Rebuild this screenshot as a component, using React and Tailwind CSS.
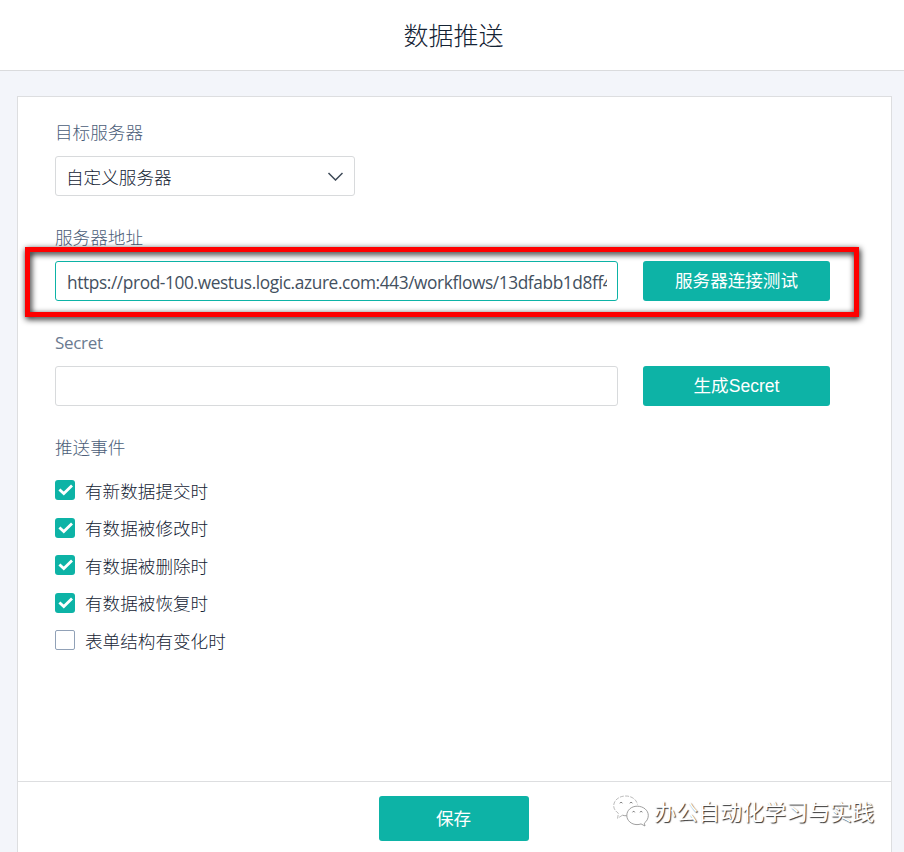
import { useState } from 'react';

const events = [
  { id: 'create', label: '有新数据提交时', checked: true },
  { id: 'update', label: '有数据被修改时', checked: true },
  { id: 'delete', label: '有数据被删除时', checked: true },
  { id: 'recover', label: '有数据被恢复时', checked: true },
  { id: 'form', label: '表单结构有变化时', checked: false },
];

function Label({ children, className = 'font-light text-[#4b5d78]' }) {
  return (
    <div className={`h-6 whitespace-nowrap leading-[22px] ${className}`}>{children}</div>
  );
}

function Button({ children, className }) {
  return (
    <button
      type="button"
      className={`shrink-0 rounded-[3px] bg-[#0db3a6] text-center font-['Liberation_Sans','Noto_Sans_CJK_SC',sans-serif] tracking-[-0.02px] text-white ${className}`}
    >
      {children}
    </button>
  );
}

function Checkbox({ label, checked, onChange }) {
  return (
    <button type="button" className="flex h-[37.5px] items-start text-left" onClick={onChange}>
      {checked ? (
        <span className="h-5 w-5 shrink-0 rounded-[3px] bg-[#0db3a6]">
          <svg viewBox="0 0 20 20" className="h-5 w-5" fill="none" stroke="#fff" strokeWidth="2.8">
            <path d="M4.4 9.4 L8.8 13.6 L17 5.6" />
          </svg>
        </span>
      ) : (
        <span className="h-5 w-5 shrink-0 rounded-[2px] border border-[#91a1b7] bg-white" />
      )}
      <span className="ml-2.5 pt-[0.5px] whitespace-nowrap font-light leading-[21px]">{label}</span>
    </button>
  );
}

// Account watermark, white with a dark embossed edge
function Watermark() {
  return (
    <div className="absolute top-[13px] right-[17px] flex items-center">
      <svg width="36" height="32" viewBox="0 0 36 32" fill="#fff" stroke="#888" strokeWidth="0.8">
        <path
          d="M9.5 20.2 L4.6 23.3 L5.4 18.3 C2.6 16.3 0.7 13.8 0.7 10.8 C0.7 5.4 6 1 12.6 1 C18.7 1 23.5 4.5 24.5 9.5"
          stroke="#aaa"
          strokeDasharray="4 1.2"
        />
        <path d="M9.5 20.2 C11 20.7 12.5 20.8 13.8 20.7" />
        <path d="M31.3 28.2 L32 31 L28 28.9 C26.7 29.4 25.4 29.6 24 29.6 C18.3 29.6 13.8 25.5 13.8 20.5 C13.8 15.2 18.3 11.2 24.2 11.2 C30.3 11.2 35.3 15.2 35.3 20.5 C35.3 23.6 33.7 26.3 31.3 28.2 Z" />
        <path d="M6.8 8.3 a1.4 1.4 0 0 1 2.6 0 M16.8 8.3 a1.4 1.4 0 0 1 2.6 0 M19.5 17.3 a1.2 1.2 0 0 1 2.3 0 M27 17.3 a1.2 1.2 0 0 1 2.3 0" stroke="#555" />
      </svg>
      <span className="ml-[5px] whitespace-nowrap text-[22px] leading-8 text-white [text-shadow:1px_1px_1px_#333]">
        办公自动化学习与实践
      </span>
    </div>
  );
}

export default function App() {
  const [items, setItems] = useState(events);
  const [url, setUrl] = useState('https://prod-100.westus.logic.azure.com:443/workflows/13dfabb1d8ff4');
  const [secret, setSecret] = useState('');

  const toggle = (id) =>
    setItems(items.map((it) => (it.id === id ? { ...it, checked: !it.checked } : it)));

  return (
    <div className="flex h-[852px] w-[904px] flex-col overflow-hidden bg-[#f3f5fa] font-['Open_Sans','Noto_Sans_CJK_SC',sans-serif] text-[17.6px] text-[#142334]">
      <header className="flex h-[71px] shrink-0 items-center justify-center border-b border-[#dadbdd] bg-white pt-0.5 pl-[3px]">
        <h1 className="text-[25px] font-light">数据推送</h1>
      </header>

      <main className="mt-[25px] mr-3 ml-[17px] flex flex-1 flex-col border-x border-t border-[#dddee0] bg-white">
        <div className="h-[684px] px-[37px] pt-6">
          <Label>目标服务器</Label>
          <button
            type="button"
            className="mt-[11px] flex h-10 w-[300px] items-center justify-between rounded-[3px] border border-[#d8dadc] pr-[11px] pl-2.5"
          >
            <span className="pt-[3px] font-light">自定义服务器</span>
            <svg width="16" height="10" viewBox="0 0 16 10" fill="none" stroke="#3d4957" strokeWidth="1.5">
              <path d="M1.5 2 L8.5 9 L15.5 2" />
            </svg>
          </button>

          <div className="relative mt-[30px]">
            <Label>服务器地址</Label>
            <div className="mt-[11px] flex gap-[25px]">
              <input
                value={url}
                onChange={(e) => setUrl(e.target.value)}
                className="h-10 w-[563px] rounded-[3px] border border-[#0db3a6] pt-0.5 pr-2.5 pl-[11px] text-[17.3px] tracking-[-0.39px] text-[#435060] outline-none"
              />
              <Button className="h-10 w-[187px]">服务器连接测试</Button>
            </div>
            {/* Highlight frame around the address row */}
            <div className="pointer-events-none absolute top-[21px] -left-[30px] h-[70px] w-[834px] border-[5px] border-[#fe0000] drop-shadow-[1px_2px_3px_rgba(0,0,0,1)]" />
          </div>

          <div className="mt-[30px]">
            <Label className="pt-px text-[17px] tracking-[-0.3px] text-[#6a7a90]">Secret</Label>
            <div className="mt-[11px] flex gap-[25px]">
              <input
                value={secret}
                onChange={(e) => setSecret(e.target.value)}
                className="h-10 w-[563px] rounded-[3px] border border-[#d8dadc] px-2.5 outline-none"
              />
              <Button className="h-10 w-[187px]">生成Secret</Button>
            </div>
          </div>

          <div className="mt-[30px]">
            <Label>推送事件</Label>
            <div className="mt-5 flex flex-col items-start">
              {items.map((it) => (
                <Checkbox key={it.id} label={it.label} checked={it.checked} onChange={() => toggle(it.id)} />
              ))}
            </div>
          </div>
        </div>

        <footer className="relative flex flex-1 items-start justify-center border-t border-[#dddee0] pt-[14px] pr-[1px]">
          <Button className="h-[45px] w-[150px] pt-0.5 pr-px">保存</Button>
          <Watermark />
        </footer>
      </main>
    </div>
  );
}
